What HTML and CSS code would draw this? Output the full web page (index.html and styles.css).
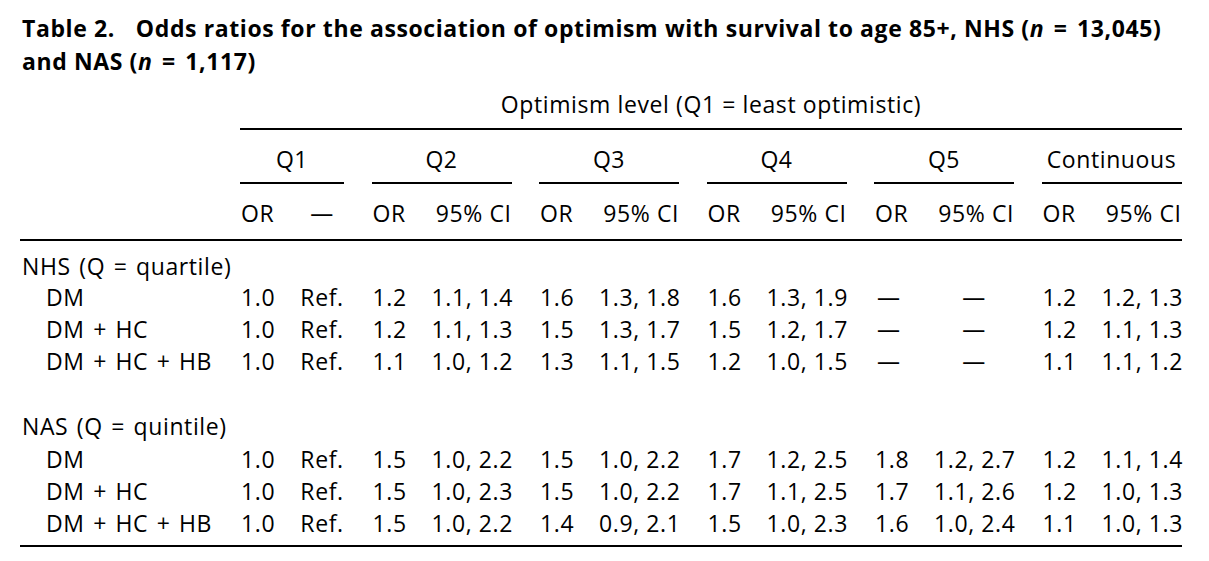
FILE: index.html
```html
<!DOCTYPE html>
<html lang="en">
<head>
<meta charset="utf-8">
<title>Table 2</title>
<link rel="stylesheet" href="styles.css">
</head>
<body>
<div class="page">
  <h1 class="caption"><span class="tlabel">Table 2.</span>Odds ratios for the association of optimism with survival to age 85+, NHS (<i>n</i> <span class="eq">=</span> 13,045) and NAS (<i>n</i> <span class="eq">=</span> 1,117)</h1>
  <div class="table">
    <div class="spanner-wrap"><div class="spanner">Optimism level (Q1 = least optimistic)</div></div>

    <div class="row head-groups">
      <div class="lab"></div>
      <div class="gtitle">Q1</div>
      <div class="gtitle">Q2</div>
      <div class="gtitle">Q3</div>
      <div class="gtitle">Q4</div>
      <div class="gtitle">Q5</div>
      <div class="gtitle">Continuous</div>
    </div>

    <div class="row head-sub">
      <div class="lab"></div>
      <div class="grp g1"><span class="or">OR</span><span class="ci ctr">—</span></div>
      <div class="grp"><span class="or">OR</span><span class="ci">95% CI</span></div>
      <div class="grp"><span class="or">OR</span><span class="ci">95% CI</span></div>
      <div class="grp"><span class="or">OR</span><span class="ci">95% CI</span></div>
      <div class="grp"><span class="or">OR</span><span class="ci">95% CI</span></div>
      <div class="grp"><span class="or">OR</span><span class="ci">95% CI</span></div>
    </div>

    <div class="tbody">
      <div class="row section first"><div class="lab">NHS (Q = quartile)</div></div>
      <div class="row">
        <div class="lab sub">DM</div>
        <div class="grp g1"><span class="or">1.0</span><span class="ci ctr">Ref.</span></div>
        <div class="grp"><span class="or">1.2</span><span class="ci">1.1, 1.4</span></div>
        <div class="grp"><span class="or">1.6</span><span class="ci">1.3, 1.8</span></div>
        <div class="grp"><span class="or">1.6</span><span class="ci">1.3, 1.9</span></div>
        <div class="grp"><span class="or dash">—</span><span class="ci ctr">—</span></div>
        <div class="grp"><span class="or">1.2</span><span class="ci">1.2, 1.3</span></div>
      </div>
      <div class="row">
        <div class="lab sub">DM + HC</div>
        <div class="grp g1"><span class="or">1.0</span><span class="ci ctr">Ref.</span></div>
        <div class="grp"><span class="or">1.2</span><span class="ci">1.1, 1.3</span></div>
        <div class="grp"><span class="or">1.5</span><span class="ci">1.3, 1.7</span></div>
        <div class="grp"><span class="or">1.5</span><span class="ci">1.2, 1.7</span></div>
        <div class="grp"><span class="or dash">—</span><span class="ci ctr">—</span></div>
        <div class="grp"><span class="or">1.2</span><span class="ci">1.1, 1.3</span></div>
      </div>
      <div class="row">
        <div class="lab sub">DM + HC + HB</div>
        <div class="grp g1"><span class="or">1.0</span><span class="ci ctr">Ref.</span></div>
        <div class="grp"><span class="or">1.1</span><span class="ci">1.0, 1.2</span></div>
        <div class="grp"><span class="or">1.3</span><span class="ci">1.1, 1.5</span></div>
        <div class="grp"><span class="or">1.2</span><span class="ci">1.0, 1.5</span></div>
        <div class="grp"><span class="or dash">—</span><span class="ci ctr">—</span></div>
        <div class="grp"><span class="or">1.1</span><span class="ci">1.1, 1.2</span></div>
      </div>
      <div class="row blank"></div>
      <div class="row section"><div class="lab">NAS (Q = quintile)</div></div>
      <div class="row">
        <div class="lab sub">DM</div>
        <div class="grp g1"><span class="or">1.0</span><span class="ci ctr">Ref.</span></div>
        <div class="grp"><span class="or">1.5</span><span class="ci">1.0, 2.2</span></div>
        <div class="grp"><span class="or">1.5</span><span class="ci">1.0, 2.2</span></div>
        <div class="grp"><span class="or">1.7</span><span class="ci">1.2, 2.5</span></div>
        <div class="grp"><span class="or">1.8</span><span class="ci">1.2, 2.7</span></div>
        <div class="grp"><span class="or">1.2</span><span class="ci">1.1, 1.4</span></div>
      </div>
      <div class="row">
        <div class="lab sub">DM + HC</div>
        <div class="grp g1"><span class="or">1.0</span><span class="ci ctr">Ref.</span></div>
        <div class="grp"><span class="or">1.5</span><span class="ci">1.0, 2.3</span></div>
        <div class="grp"><span class="or">1.5</span><span class="ci">1.0, 2.2</span></div>
        <div class="grp"><span class="or">1.7</span><span class="ci">1.1, 2.5</span></div>
        <div class="grp"><span class="or">1.7</span><span class="ci">1.1, 2.6</span></div>
        <div class="grp"><span class="or">1.2</span><span class="ci">1.0, 1.3</span></div>
      </div>
      <div class="row">
        <div class="lab sub">DM + HC + HB</div>
        <div class="grp g1"><span class="or">1.0</span><span class="ci ctr">Ref.</span></div>
        <div class="grp"><span class="or">1.5</span><span class="ci">1.0, 2.2</span></div>
        <div class="grp"><span class="or">1.4</span><span class="ci">0.9, 2.1</span></div>
        <div class="grp"><span class="or">1.5</span><span class="ci">1.0, 2.3</span></div>
        <div class="grp"><span class="or">1.6</span><span class="ci">1.0, 2.4</span></div>
        <div class="grp"><span class="or">1.1</span><span class="ci">1.0, 1.3</span></div>
      </div>
    </div>
  </div>
</div>
</body>
</html>
```
FILE: styles.css
```css
html, body {
  margin: 0;
  padding: 0;
  background: #ffffff;
}

body {
  font-family: "Open Sans", "Noto Sans", "DejaVu Sans", sans-serif;
  font-size: 23px;
  letter-spacing: 0.6px;
  color: #000000;
}

.page {
  padding: 12px 0 0 20px;
  width: 1162px;
}

.caption {
  margin: 0;
  padding-left: 2px;
  font-size: 23px;
  font-weight: 700;
  line-height: 33px;
  letter-spacing: 0.6px;
  max-width: 1168px;
}

.caption i {
  font-style: italic;
}

.caption .eq {
  margin: 0 3px;
}

.tlabel {
  margin-right: 21px;
}

.table {
  margin-top: 10px;
  width: 1162px;
}

.spanner-wrap {
  padding-left: 220px;
}

.spanner {
  text-align: center;
  line-height: 32px;
  padding-bottom: 8px;
  border-bottom: 2px solid #000;
}

.row {
  display: grid;
  grid-template-columns: 192.5px 104px repeat(5, 140px);
  column-gap: 27.5px;
  line-height: 32px;
  height: 32px;
}

.head-groups {
  margin-top: 13px;
  height: auto;
}

.gtitle {
  text-align: center;
  padding-bottom: 7px;
  border-bottom: 2px solid #000;
}

.head-sub {
  margin-top: 13px;
  height: auto;
  padding-bottom: 10px;
  border-bottom: 2px solid #000;
}

.tbody {
  padding-top: 10px;
  padding-bottom: 6px;
  border-bottom: 2px solid #000;
}

.row.section {
  height: 33px;
  line-height: 33px;
}

.row.section.first {
  height: 30px;
  line-height: 30px;
}

.row.blank {
  height: 33px;
}

.lab {
  padding-left: 2px;
  white-space: nowrap;
  word-spacing: 2px;
}

.lab.sub {
  padding-left: 26px;
}

.section .lab {
  grid-column: 1 / -1;
}

.grp {
  display: grid;
  grid-template-columns: 60px 80px;
  white-space: nowrap;
}

.grp.g1 {
  grid-template-columns: 60px 44px;
}

.or {
  text-align: left;
  padding-left: 1px;
}

.or.dash {
  padding-left: 3px;
}

.ci {
  text-align: right;
}

.ci.ctr {
  text-align: center;
}
```
